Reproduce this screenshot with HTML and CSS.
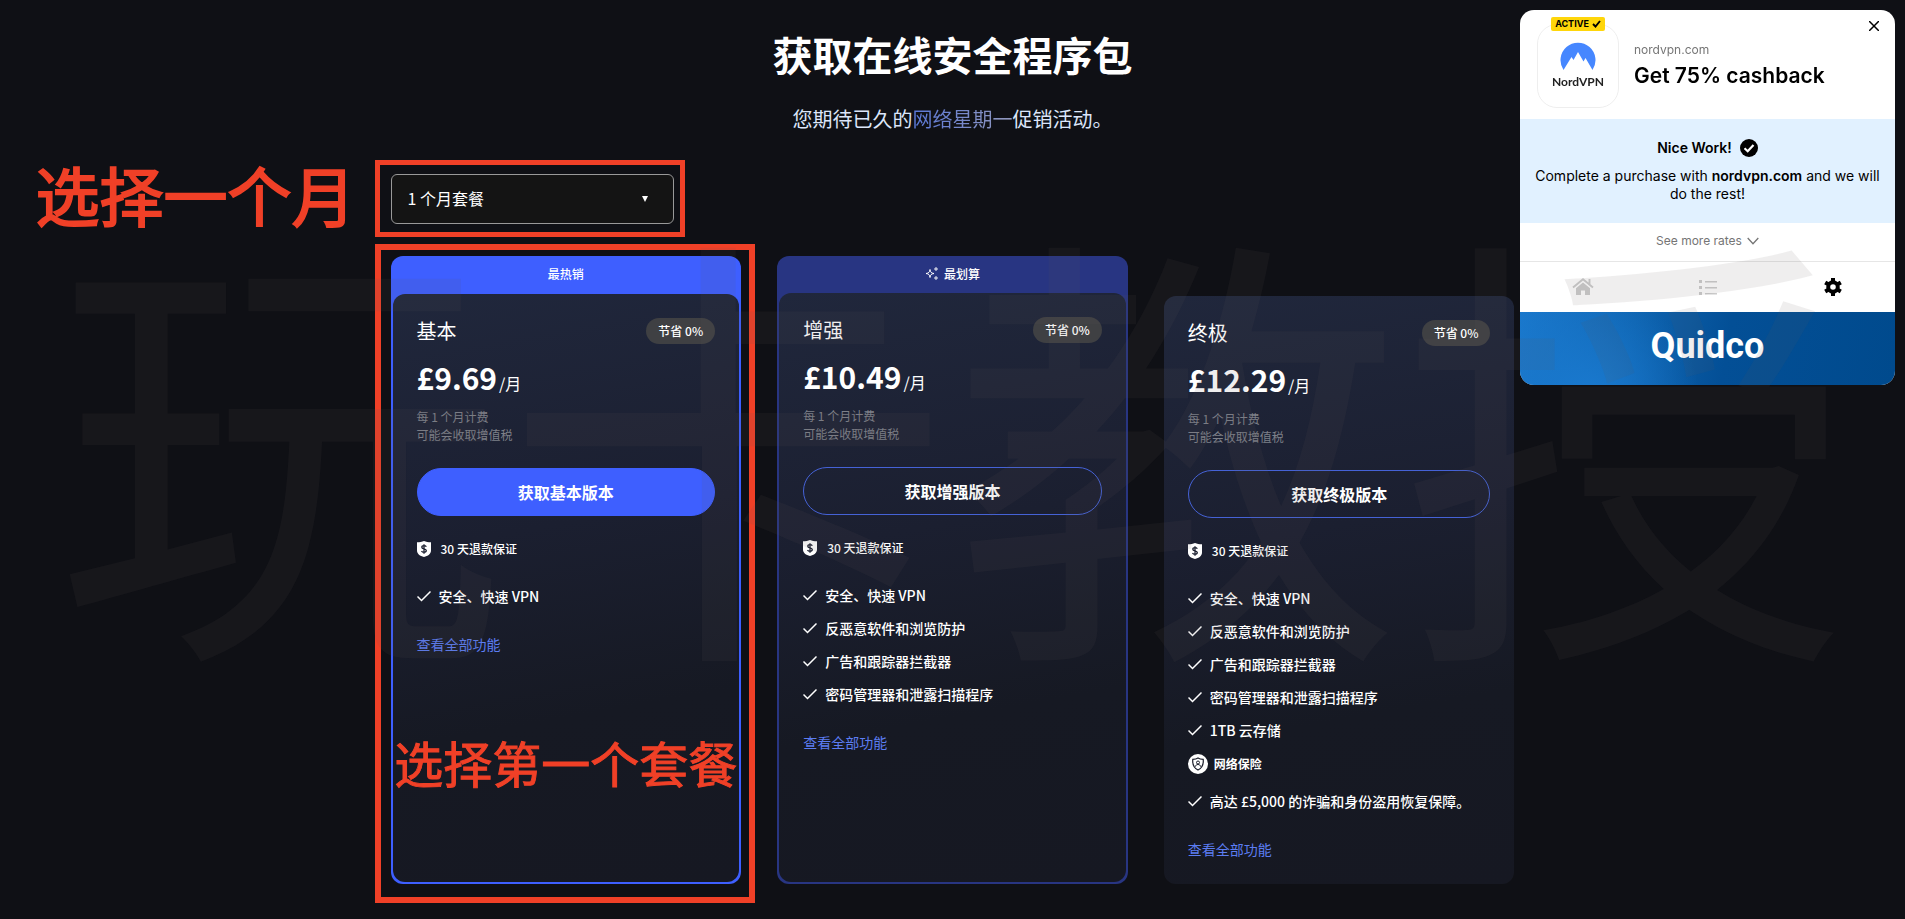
FILE: index.html
```
<!DOCTYPE html>
<html lang="zh-CN">
    <head>
        <meta charset="UTF-8">
        <meta name="viewport" content="width=device-width, initial-scale=1.0">
        <title>获取在线安全程序包</title>
        <link rel="stylesheet" href="styles.css">
    </head>
    <body>
        <!-- shared icons -->
        <svg class="sprite" width="0" height="0" aria-hidden="true">
            <symbol id="icon-check" viewBox="0 0 14 14">
                <path d="M0.5 7.5 4.5 11.5 13.5 2.5" fill="none" stroke="currentColor" stroke-width="1.5"/>
            </symbol>
            <symbol id="icon-refund" viewBox="0 0 14 16">
                <path d="M7 0C5 .9 2.800 1.200 0 1.200V9.500C0 13 3 15 7 16c4-1 7-3 7-6.500V1.200C11.200 1.200 9 .9 7 0z" fill="#fff"/>
                <path d="M9.300 5.700C8.900 4.900 8 4.600 7 4.600c-1.300 0-2.200.6-2.200 1.600 0 2.300 4.500 1 4.500 3.400 0 1-.9 1.700-2.300 1.700-1.200 0-2.100-.5-2.500-1.300M7 3.300v9.400" fill="none" stroke="#1c2030" stroke-width="1.300"/>
            </symbol>
            <symbol id="icon-insurance" viewBox="0 0 20 20">
                <circle cx="10" cy="10" r="10" fill="#fff"/>
                <path d="M10 4C8.500 5 6.500 5.300 4.800 5.300c-.5 4.800 1 8.700 5.200 10.700 4.200-2 5.700-5.900 5.200-10.700C13.500 5.300 11.500 5 10 4z" fill="none" stroke="#1b1e2b" stroke-width="1.200"/>
                <circle cx="10" cy="8.500" r="1.500" fill="none" stroke="#1b1e2b"/>
                <path d="M7.300 12.700c.3-1.500 1.300-2.200 2.700-2.200s2.400.7 2.700 2.200" fill="none" stroke="#1b1e2b"/>
            </symbol>
        </svg>

        <main class="page">
            <h1>获取在线安全程序包</h1>
            <p class="subtitle">您期待已久的<span class="highlight">网络星期一</span>促销活动。</p>

            <div class="plan-select">
                <select id="plan" aria-label="套餐时长">
                    <option>1 个月套餐</option>
                </select>
                <svg class="arrow" width="6" height="6" viewBox="0 0 6 6"><path d="M0 0H6L3 6z" fill="#fff"/></svg>
                <div class="mark mark-select"></div>
                <div class="note note-select">选择一个月</div>
            </div>

            <div class="plans">
                <section class="plan plan-hot">
                    <div class="ribbon">最热销</div>
                    <div class="card">
                        <div class="card-head">
                            <h2>基本</h2>
                            <span class="save">节省 0%</span>
                        </div>
                        <div class="price"><strong>£9.69</strong> /月</div>
                        <p class="terms">每 1 个月计费<br>可能会收取增值税</p>
                        <button class="buy buy-main">获取基本版本</button>
                        <p class="refund"><svg width="14" height="16"><use href="#icon-refund"/></svg>30 天退款保证</p>
                        <ul>
                            <li><svg width="14" height="14"><use href="#icon-check"/></svg>安全、快速 VPN</li>
                        </ul>
                        <a class="more" href="#">查看全部功能</a>
                    </div>
                    <div class="mark mark-plan"></div>
                    <div class="note note-plan">选择第一个套餐</div>
                </section>

                <section class="plan plan-deal">
                    <div class="ribbon">
                        <svg width="13" height="13" viewBox="0 0 13 13" fill="none" stroke="#fff">
                            <path d="M5 2.500C5.500 5.300 6 6 9 6.500 6 7 5.500 7.700 5 10.500 4.500 7.700 4 7 1 6.500 4 6 4.500 5.300 5 2.500z"/>
                            <path d="M11 0v4M9 2h4M11 9v4M9 11h4" stroke-width=".9"/>
                        </svg>
                        最划算
                    </div>
                    <div class="card">
                        <div class="card-head">
                            <h2>增强</h2>
                            <span class="save">节省 0%</span>
                        </div>
                        <div class="price"><strong>£10.49</strong> /月</div>
                        <p class="terms">每 1 个月计费<br>可能会收取增值税</p>
                        <button class="buy">获取增强版本</button>
                        <p class="refund"><svg width="14" height="16"><use href="#icon-refund"/></svg>30 天退款保证</p>
                        <ul>
                            <li><svg width="14" height="14"><use href="#icon-check"/></svg>安全、快速 VPN</li>
                            <li><svg width="14" height="14"><use href="#icon-check"/></svg>反恶意软件和浏览防护</li>
                            <li><svg width="14" height="14"><use href="#icon-check"/></svg>广告和跟踪器拦截器</li>
                            <li><svg width="14" height="14"><use href="#icon-check"/></svg>密码管理器和泄露扫描程序</li>
                        </ul>
                        <a class="more" href="#">查看全部功能</a>
                    </div>
                </section>

                <section class="plan plan-plain">
                    <div class="card">
                        <div class="card-head">
                            <h2>终极</h2>
                            <span class="save">节省 0%</span>
                        </div>
                        <div class="price"><strong>£12.29</strong> /月</div>
                        <p class="terms">每 1 个月计费<br>可能会收取增值税</p>
                        <button class="buy">获取终极版本</button>
                        <p class="refund"><svg width="14" height="16"><use href="#icon-refund"/></svg>30 天退款保证</p>
                        <ul>
                            <li><svg width="14" height="14"><use href="#icon-check"/></svg>安全、快速 VPN</li>
                            <li><svg width="14" height="14"><use href="#icon-check"/></svg>反恶意软件和浏览防护</li>
                            <li><svg width="14" height="14"><use href="#icon-check"/></svg>广告和跟踪器拦截器</li>
                            <li><svg width="14" height="14"><use href="#icon-check"/></svg>密码管理器和泄露扫描程序</li>
                            <li><svg width="14" height="14"><use href="#icon-check"/></svg>1TB 云存储</li>
                            <li class="insurance"><svg width="20" height="20"><use href="#icon-insurance"/></svg>网络保险</li>
                            <li><svg width="14" height="14"><use href="#icon-check"/></svg>高达 £5,000 的诈骗和身份盗用恢复保障。</li>
                        </ul>
                        <a class="more" href="#">查看全部功能</a>
                    </div>
                </section>
            </div>
        </main>

        <!-- cashback popup -->
        <aside class="popup" lang="en">
            <div class="popup-head">
                <div class="brand">
                    <span class="active">ACTIVE
                        <svg width="9" height="8" viewBox="0 0 9 8"><path d="M1 4 3.500 6.500 8 1" fill="none" stroke="#000" stroke-width="1.900"/></svg>
                    </span>
                    <svg width="36" height="28" viewBox="0 0 36 28">
                        <path d="M3.500 28A17.500 17.500 0 1 1 32.500 28L25.500 16 23.500 19.500 18 10 13.500 18 11.500 15z" fill="#4687ff"/>
                    </svg>
                    <span class="brand-name">NordVPN</span>
                </div>
                <div class="offer">
                    <span class="site">nordvpn.com</span>
                    <span class="rate">Get 75% cashback</span>
                </div>
                <button class="close" aria-label="Close">
                    <svg width="10" height="10" viewBox="0 0 10 10"><path d="M0 0 10 10M10 0 0 10" stroke="#000" stroke-width="1.500"/></svg>
                </button>
            </div>
            <div class="status">
                <p class="nice">Nice Work!
                    <svg width="18" height="18" viewBox="0 0 18 18"><circle cx="9" cy="9" r="9"/><path d="M4.500 9.300 7.700 12.300 13.500 6" fill="none" stroke="#fff" stroke-width="2.200"/></svg>
                </p>
                <p>Complete a purchase with <b>nordvpn.com</b> and we will do the rest!</p>
            </div>
            <button class="rates">See more rates
                <svg width="12" height="8" viewBox="0 0 12 8"><path d="M.7 1 6 6.700 11.300 1" fill="none" stroke="#757575" stroke-width="1.300"/></svg>
            </button>
            <nav>
                <a href="#" aria-label="Home">
                    <svg width="22" height="18" viewBox="0 0 22 18" fill="#ccc">
                        <path d="M11 4.500 4 10.300V17h5v-4.500h4V17h5v-6.700z"/>
                        <path d="M1 9.500 11 1.300 21 9.500M17.500 1v5" fill="none" stroke="#ccc" stroke-width="1.900"/>
                    </svg>
                </a>
                <a href="#" aria-label="List">
                    <svg width="18" height="16" viewBox="0 0 18 16" fill="#ccc">
                        <path d="M0 1h3v3H0zM0 7h3v3H0zM0 13h3v3H0zM6 2h12v1.400H6zM6 8h12v1.400H6zM6 14h12v1.400H6z"/>
                    </svg>
                </a>
                <a href="#" aria-label="Settings">
                    <svg width="18" height="18" viewBox="0 0 18 18">
                        <circle cx="9" cy="9" r="4.800" fill="none" stroke="#000" stroke-width="4"/>
                        <path d="M9 0v4M9 14v4M1.200 4.500 4.700 6.500M13.300 11.500 16.800 13.500M1.200 13.500 4.700 11.500M13.300 6.500 16.800 4.500" stroke="#000" stroke-width="4"/>
                    </svg>
                </a>
            </nav>
            <footer>Quidco</footer>
        </aside>

        <div class="watermark" aria-hidden="true">玩卡教授</div>
    </body>
</html>
```
FILE: styles.css
```
* {
    box-sizing: border-box;
}
body {
    margin: 0;
    background-color: #0f1015;
    color: #fff;
    font-family: "Noto Sans CJK SC", sans-serif;
    font-size: 14px;
    line-height: 22px;
}
h1, h2, p, ul {
    margin: 0;
    padding: 0;
    list-style: none;
}
button, select {
    font-family: inherit;
    color: inherit;
    cursor: pointer;
}
a {
    text-decoration: none;
}
.sprite {
    position: absolute;
}

.page {
    max-width: 1124px;
    margin: 0 auto;
    padding: 30px 0;
}
h1 {
    font-size: 40px;
    line-height: 48px;
    text-align: center;
}
.subtitle {
    margin-top: 29px;
    color: #dce6fa;
    font-size: 20px;
    line-height: 24px;
    text-align: center;
}
.highlight {
    background: linear-gradient(90deg, #5b78d8, #9298bc);
    background-clip: text;
    -webkit-background-clip: text;
    color: transparent;
}

/* plan length */
.plan-select {
    position: relative;
    width: 283px;
    margin-top: 43px;
}
.plan-select select {
    display: block;
    width: 100%;
    height: 50px;
    padding: 0 16px 2px;
    appearance: none;
    background-color: #141414;
    border: 1px solid #999;
    border-radius: 6px;
    font-size: 16px;
}
.arrow {
    position: absolute;
    top: 22px;
    right: 26px;
    pointer-events: none;
}

/* red marks */
.mark {
    position: absolute;
    border: 5px solid #f04027;
    pointer-events: none;
}
.mark-select {
    inset: -14px -11px -13px -16px;
}
.mark-plan {
    inset: -12px -14px -19px -16px;
    border-width: 6px;
}
.note {
    position: absolute;
    color: #f04027;
    -webkit-text-stroke: 1px #f04027;
    white-space: nowrap;
    pointer-events: none;
}
.note-select {
    right: 100%;
    bottom: 6px;
    margin-right: 35px;
    font-size: 64px;
    line-height: 50px;
    -webkit-text-stroke-width: 2px;
}
.note-plan {
    left: 0;
    right: 0;
    bottom: 92px;
    font-size: 49px;
    line-height: 60px;
    text-align: center;
}

/* plans */
.plans {
    display: grid;
    grid-template-columns: repeat(3, 1fr);
    gap: 36px;
    margin-top: 32px;
}
.plan {
    position: relative;
    display: flex;
    flex-direction: column;
    border-radius: 12px;
}
.plan-hot {
    padding: 0 2px 2px;
    background-color: #3e5fff;
}
.plan-deal {
    padding: 0 2px 2px;
    background-color: #283582;
}
.plan-plain {
    margin-top: 40px;
}
.ribbon {
    display: flex;
    justify-content: center;
    align-items: center;
    gap: 6px;
    height: 38px;
    padding-bottom: 2px;
    font-size: 12px;
    font-weight: 500;
}
.plan-deal .ribbon {
    height: 37px;
}
.card {
    flex: 1;
    padding: 24px 24px 24px;
    background: linear-gradient(170deg, #20273c 0%, #1b1f30 40%, #161923 70%, #161822 100%);
    border-radius: 12px;
}
.card-head {
    display: flex;
    justify-content: space-between;
    align-items: center;
    height: 26px;
    margin-bottom: 13px;
}
h2 {
    font-size: 20px;
    font-weight: 400;
    line-height: 26px;
}
.save {
    padding: 0 12px;
    background-color: #3f4043;
    border-radius: 13px;
    font-size: 12px;
    font-weight: 500;
    line-height: 26px;
}
.price {
    display: flex;
    align-items: baseline;
    gap: 2px;
    height: 44px;
    margin-bottom: 7px;
    font-size: 16px;
    line-height: 40px;
}
.price strong {
    font-size: 30px;
}
.terms {
    margin-bottom: 24px;
    color: #7e8089;
    font-size: 12px;
    line-height: 18px;
}
.buy {
    display: block;
    width: 100%;
    height: 48px;
    margin-bottom: 24px;
    background: none;
    border: 1px solid #4562d6;
    border-radius: 24px;
    font-size: 16px;
    font-weight: 700;
}
.buy-main {
    background-color: #3e5fff;
    border-color: #3e5fff;
}
.refund {
    display: flex;
    align-items: center;
    gap: 10px;
    margin-bottom: 27px;
    font-size: 12px;
    font-weight: 500;
    line-height: 18px;
}
.card ul {
    display: flex;
    flex-direction: column;
    gap: 11px;
    margin-bottom: 26px;
}
.card li {
    display: flex;
    align-items: center;
    gap: 8px;
    font-weight: 500;
}
.card .insurance {
    gap: 6px;
    margin-bottom: 3px;
    font-size: 12px;
    font-weight: 700;
    line-height: 24px;
}
.more {
    display: block;
    color: #5c7df2;
}

/* cashback popup */
.popup {
    position: fixed;
    top: 10px;
    right: 10px;
    width: 375px;
    overflow: hidden;
    background-color: #fff;
    border-radius: 14px;
    color: #000;
    font-family: Inter, sans-serif;
    line-height: 18px;
}
.popup-head {
    position: relative;
    display: flex;
    gap: 15px;
    padding: 14px 17px 11px;
}
.brand {
    position: relative;
    display: flex;
    flex-direction: column;
    align-items: center;
    width: 82px;
    height: 84px;
    padding-top: 17px;
    border: 1px solid #eee;
    border-radius: 20px;
}
.active {
    position: absolute;
    top: -8px;
    left: 13px;
    display: flex;
    justify-content: center;
    align-items: center;
    gap: 3px;
    width: 54px;
    height: 14px;
    background-color: #ffd60a;
    border-radius: 2px;
    font-size: 9px;
    font-weight: 700;
}
.brand-name {
    margin-top: 3px;
    color: #222;
    font-family: Lato, sans-serif;
    font-size: 12px;
    font-weight: 700;
}
.offer {
    display: flex;
    flex-direction: column;
    padding-top: 17px;
}
.site {
    color: #757575;
    font-size: 12px;
}
.rate {
    margin-top: 4px;
    font-size: 21px;
    font-weight: 600;
    line-height: 26px;
}
.close {
    position: absolute;
    top: 11px;
    right: 16px;
    display: flex;
    padding: 0;
    background: none;
    border: 0;
}
.status {
    padding: 20px 12px;
    background-color: #e1f1ff;
    text-align: center;
}
.nice {
    display: flex;
    justify-content: center;
    align-items: center;
    gap: 8px;
    margin-bottom: 9px;
    padding-bottom: 1px;
    font-weight: 600;
}
.status b {
    font-weight: 600;
}
.rates {
    display: flex;
    justify-content: center;
    align-items: center;
    gap: 5px;
    width: 100%;
    height: 39px;
    padding-bottom: 4px;
    background: none;
    border: 0;
    border-bottom: 1px solid #e6e6e6;
    color: #757575;
    font-size: 12px;
}
.popup nav {
    display: grid;
    grid-template-columns: repeat(3, 1fr);
    height: 50px;
}
.popup nav a {
    display: flex;
    justify-content: center;
    align-items: center;
}
.popup footer {
    padding-bottom: 4px;
    background: radial-gradient(circle at 18% 120%, #1a7ad0 0%, transparent 35%), linear-gradient(100deg, #1a78cc 0%, #0f64b0 30%, #034f96 55%, #004a8d 100%);
    color: #fff;
    font-family: Roboto, sans-serif;
    font-size: 36px;
    font-weight: 700;
    line-height: 69px;
    text-align: center;
}

.watermark {
    position: fixed;
    inset: 0;
    display: flex;
    justify-content: center;
    align-items: center;
    padding-bottom: 60px;
    overflow: hidden;
    color: rgba(95, 90, 90, 0.1);
    font-size: 449px;
    line-height: 1;
    white-space: nowrap;
    pointer-events: none;
}
```
